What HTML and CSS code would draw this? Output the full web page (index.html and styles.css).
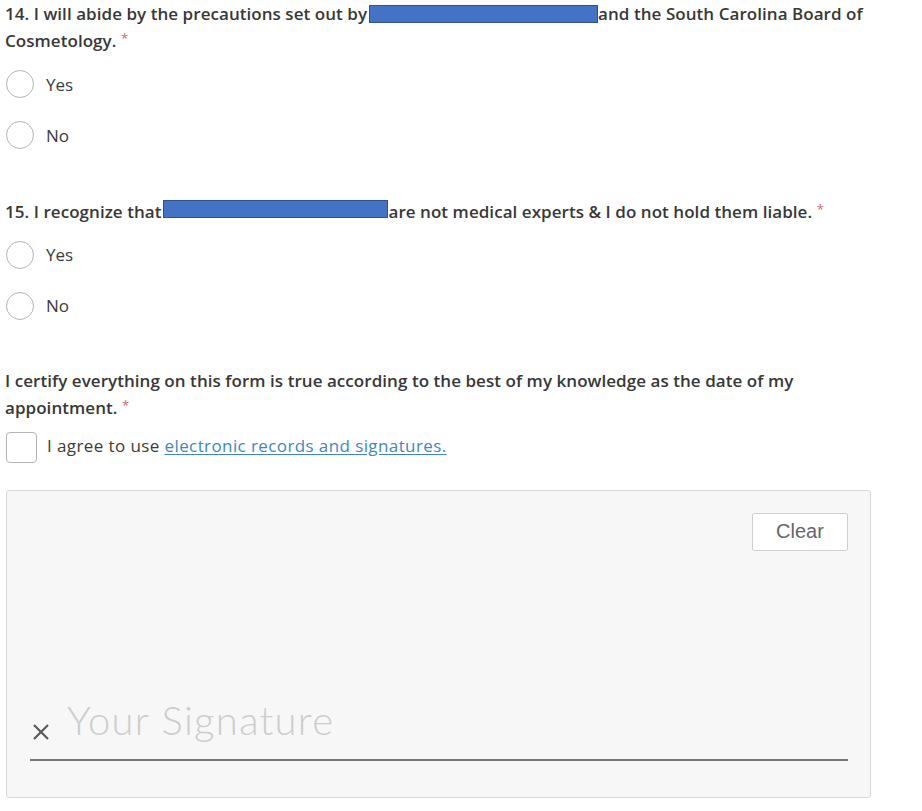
FILE: index.html
```html
<!DOCTYPE html>
<html>
<head>
<meta charset="utf-8">
<link rel="stylesheet" href="styles.css">
</head>
<body>
<main class="form">
  <section class="question q14">
    <div class="label">14. I will abide by the precautions set out by<span class="redact redact-a"></span>and the South Carolina Board of Cosmetology. <span class="req">*</span></div>
    <div class="options">
      <label class="option"><span class="radio"></span><span class="opt-text">Yes</span></label>
      <label class="option"><span class="radio"></span><span class="opt-text">No</span></label>
    </div>
  </section>
  <section class="question q15">
    <div class="label">15. I recognize that<span class="redact redact-b"></span>are not medical experts &amp; I do not hold them liable. <span class="req">*</span></div>
    <div class="options">
      <label class="option"><span class="radio"></span><span class="opt-text">Yes</span></label>
      <label class="option"><span class="radio"></span><span class="opt-text">No</span></label>
    </div>
  </section>
  <section class="question certify">
    <div class="label">I certify everything on this form is true according to the best of my knowledge as the date of my appointment. <span class="req">*</span></div>
    <label class="agree"><span class="checkbox"></span><span class="opt-text agree-text">I agree to use <a class="link" href="#">electronic records and signatures.</a></span></label>
  </section>
  <section class="sigbox">
    <div class="sig-top"><button class="clear">Clear</button></div>
    <div class="sig-line">
      <svg class="sig-x" width="18" height="18" viewBox="0 0 18 18"><path d="M2 2 L16 16 M16 2 L2 16" stroke="#5a5a5a" stroke-width="2.2" fill="none"/></svg>
      <span class="sig-placeholder">Your Signature</span>
    </div>
  </section>
</main>
</body>
</html>
```

FILE: styles.css
```css
html, body {
  margin: 0;
  padding: 0;
  background: #ffffff;
}
body {
  font-family: "Open Sans", "Lato", sans-serif;
  color: #3b3b3b;
}
.form {
  display: flex;
  flex-direction: column;
  padding: 0 0 0 5px;
  width: 872px;
}
.label {
  font-size: 17px;
  font-weight: 600;
  line-height: 27px;
  letter-spacing: 0.05px;
  color: #383838;
}
.redact {
  display: inline-block;
  vertical-align: top;
  margin-top: 5px;
  height: 18px;
  background: #4472c4;
  border: 1px solid #2f528f;
  box-sizing: border-box;
}
.redact-a { width: 229px; margin-left: 2px; }
.redact-b { width: 225px; margin-top: 2px; margin-left: 2px; }
.req {
  display: inline-block;
  color: #d46a6a;
  font-size: 13px;
  font-weight: 400;
  vertical-align: top;
  line-height: 13px;
  margin-top: 5px;
}
.options {
  display: flex;
  flex-direction: column;
  gap: 23px;
  margin-top: 16px;
}
.option, .agree {
  display: flex;
  align-items: center;
  gap: 12px;
  height: 28px;
}
.radio {
  width: 26px;
  height: 26px;
  border: 1px solid #b5b5b5;
  border-radius: 50%;
  margin-left: 1px;
  background: #fff;
  flex: none;
}
.opt-text {
  font-size: 17px;
  font-weight: 400;
  color: #3b3b3b;
}
.q15 { margin-top: 48.5px; }
.certify { margin-top: 47.5px; }
.agree {
  margin-top: 10.5px;
  height: 31px;
  gap: 10px;
}
.agree-text {
  letter-spacing: 0.4px;
  margin-top: -4px;
}
.checkbox {
  width: 29px;
  height: 29px;
  border: 1px solid #b5b5b5;
  border-radius: 4px;
  margin-left: 1px;
  background: #fff;
  flex: none;
}
.link {
  color: #3f87bd;
  text-decoration: underline;
  text-underline-offset: 2px;
}
.sigbox {
  margin-top: 27px;
  margin-left: 1px;
  width: 865px;
  height: 308px;
  box-sizing: border-box;
  background: #f7f7f7;
  border: 1px solid #d9d9d9;
  border-radius: 3px;
  display: flex;
  flex-direction: column;
  justify-content: space-between;
  padding: 22px 22px 36px 23px;
}
.sig-top {
  display: flex;
  justify-content: flex-end;
}
.clear {
  width: 96px;
  height: 38px;
  background: #fff;
  border: 1px solid #cfcfcf;
  border-radius: 2px;
  font-family: "Liberation Sans", Arial, sans-serif;
  font-size: 20px;
  color: #666;
  padding: 0;
}
.sig-line {
  display: flex;
  align-items: flex-end;
  gap: 17px;
  border-bottom: 2px solid #757575;
  padding: 0 0 17px 2px;
}
.sig-x {
  flex: none;
  margin-bottom: 1px;
}
.sig-placeholder {
  font-family: "Lato", sans-serif;
  font-weight: 300;
  font-size: 40px;
  line-height: 40px;
  letter-spacing: 1.3px;
  color: #cdcdcd;
  margin-bottom: 2px;
}
```
